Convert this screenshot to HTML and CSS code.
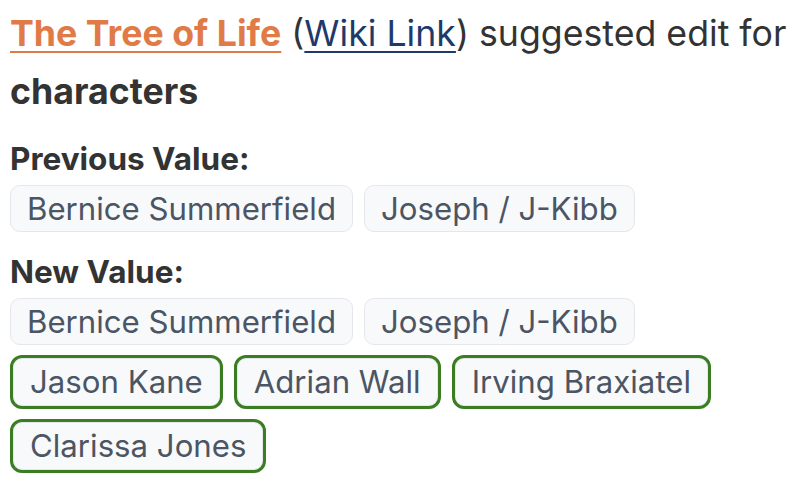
FILE: index.html
```html
<!DOCTYPE html>
<html lang="en">
<head>
    <meta charset="UTF-8">
    <meta name="viewport" content="width=device-width, initial-scale=1.0">
    <title>Suggested edit</title>
    <link rel="stylesheet" href="styles.css">
</head>
<body>
    <div class="edit">
        <p class="summary">
            <a class="work-link" href="#">The Tree of Life</a>
            (<a class="wiki-link" href="#">Wiki Link</a>) suggested edit for
            <strong>characters</strong>
        </p>

        <div class="field">
            <div class="field-label">Previous Value:</div>
            <div class="chips">
                <span class="chip">Bernice Summerfield</span>
                <span class="chip">Joseph / J-Kibb</span>
            </div>
        </div>

        <div class="field">
            <div class="field-label">New Value:</div>
            <div class="chips">
                <span class="chip">Bernice Summerfield</span>
                <span class="chip">Joseph / J-Kibb</span>
                <span class="chip added">Jason Kane</span>
                <span class="chip added">Adrian Wall</span>
                <span class="chip added">Irving Braxiatel</span>
                <span class="chip added">Clarissa Jones</span>
            </div>
        </div>
    </div>
</body>
</html>
```

FILE: styles.css
```css
body {
    margin: 0;
    padding: 0 10px;
    background: #ffffff;
    color: #333333;
    font-family: Inter, "Noto Sans", sans-serif;
}
.edit {
    width: 790px;
}
.summary {
    margin: 4px 0 0 0;
    font-size: 35.7px;
    line-height: 58px;
}
.summary strong {
    font-weight: 700;
}
.work-link {
    color: #e07b48;
    font-weight: 700;
    text-decoration-thickness: 2px;
    text-underline-offset: 5px;
}
.wiki-link {
    color: #1e3a6b;
    text-decoration-thickness: 2px;
    text-underline-offset: 5px;
}
.field {
    margin-top: 20px;
}
.field + .field {
    margin-top: 21px;
}
.field-label {
    font-size: 31.5px;
    font-weight: 700;
    line-height: 38px;
    margin-bottom: 7px;
}
.chips {
    display: flex;
    flex-wrap: wrap;
    gap: 10px 11px;
}
.chip {
    display: inline-block;
    font-size: 31.2px;
    line-height: 38px;
    padding: 3.5px 16px;
    border: 1px solid #e5e7eb;
    border-radius: 10px;
    background: #f8f9fb;
    color: #4b5563;
}
.chip.added {
    padding: 5px 17px;
    border: 3px solid #3a7d22;
    border-radius: 12px;
    box-shadow: inset 0 0 0 1px #e5e7eb;
}
```
